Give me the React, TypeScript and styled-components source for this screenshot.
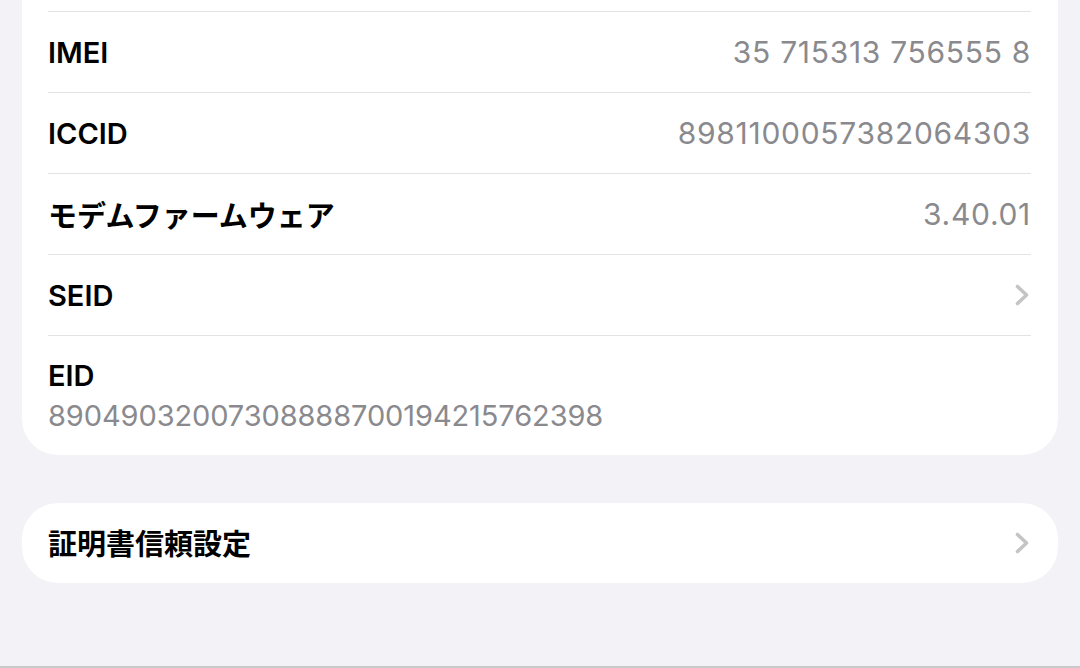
import React from 'react';
import styled, { createGlobalStyle } from 'styled-components';

const GlobalStyle = createGlobalStyle`
  html, body {
    margin: 0;
    padding: 0;
    background: #f2f2f7;
  }
  body {
    font-family: Inter, "Noto Sans CJK JP", "Noto Sans", sans-serif;
    -webkit-font-smoothing: antialiased;
  }
`;

interface InfoRow {
  label: string;
  value?: string;
  chevron?: boolean;
  stacked?: boolean;
}

const rows: InfoRow[] = [
  { label: 'IMEI', value: '35 715313 756555 8' },
  { label: 'ICCID', value: '8981100057382064303' },
  { label: 'モデムファームウェア', value: '3.40.01' },
  { label: 'SEID', chevron: true },
  { label: 'EID', value: '89049032007308888700194215762398', stacked: true },
];

const Chevron = () => (
  <ChevronIcon viewBox="0 0 14 22" width="14" height="22">
    <path d="M2.5 2.5 L11.5 11 L2.5 19.5" />
  </ChevronIcon>
);

const App = () => (
  <>
    <GlobalStyle />
    <Page>
      <Card top>
        {rows.map((row) => (
          <Row key={row.label}>
            <RowInner stacked={row.stacked}>
              <Label>{row.label}</Label>
              {row.value && <Value stacked={row.stacked}>{row.value}</Value>}
              {row.chevron && <Chevron />}
            </RowInner>
          </Row>
        ))}
      </Card>
      <Card>
        <Row>
          <RowInner noBorder>
            <Label cjk>証明書信頼設定</Label>
            <Chevron />
          </RowInner>
        </Row>
      </Card>
    </Page>
  </>
);

export default App;

const Page = styled.div`
  box-sizing: border-box;
  height: 668px;
  padding: 0 22px;
  display: flex;
  flex-direction: column;
  gap: 48px;
  border-bottom: 2px solid #c9c9cc;
  overflow: hidden;
`;

const Card = styled.div<{ top?: boolean }>`
  background: #ffffff;
  border-radius: ${(p) => (p.top ? '0 0 36px 36px' : '36px')};
  padding-top: ${(p) => (p.top ? '11px' : '0')};
`;

const Row = styled.div`
  padding: 0 27px 0 26px;
`;

const RowInner = styled.div<{ stacked?: boolean; noBorder?: boolean }>`
  display: flex;
  flex-direction: ${(p) => (p.stacked ? 'column' : 'row')};
  align-items: ${(p) => (p.stacked ? 'flex-start' : 'center')};
  justify-content: ${(p) => (p.stacked ? 'center' : 'space-between')};
  height: ${(p) => (p.stacked ? '118px' : '80px')};
  padding-bottom: ${(p) => (p.stacked ? '1px' : '0')};
  border-top: ${(p) => (p.noBorder ? 'none' : '1px solid #e3e3e6')};
  box-sizing: content-box;
`;

const Label = styled.span<{ cjk?: boolean }>`
  font-size: 29px;
  font-weight: 600;
  color: #000000;
  margin-top: ${(p) => (p.cjk ? '-3px' : '0')};
`;

const Value = styled.span<{ stacked?: boolean }>`
  font-size: ${(p) => (p.stacked ? '29px' : '30px')};
  color: #8a8a8e;
  margin-top: ${(p) => (p.stacked ? '5px' : '0')};
  letter-spacing: ${(p) => (p.stacked ? '-0.1px' : '0.7px')};
`;

const ChevronIcon = styled.svg`
  fill: none;
  stroke: #c4c4c7;
  stroke-width: 3.6;
  stroke-linecap: round;
  stroke-linejoin: round;
  margin-right: 2px;
`;
